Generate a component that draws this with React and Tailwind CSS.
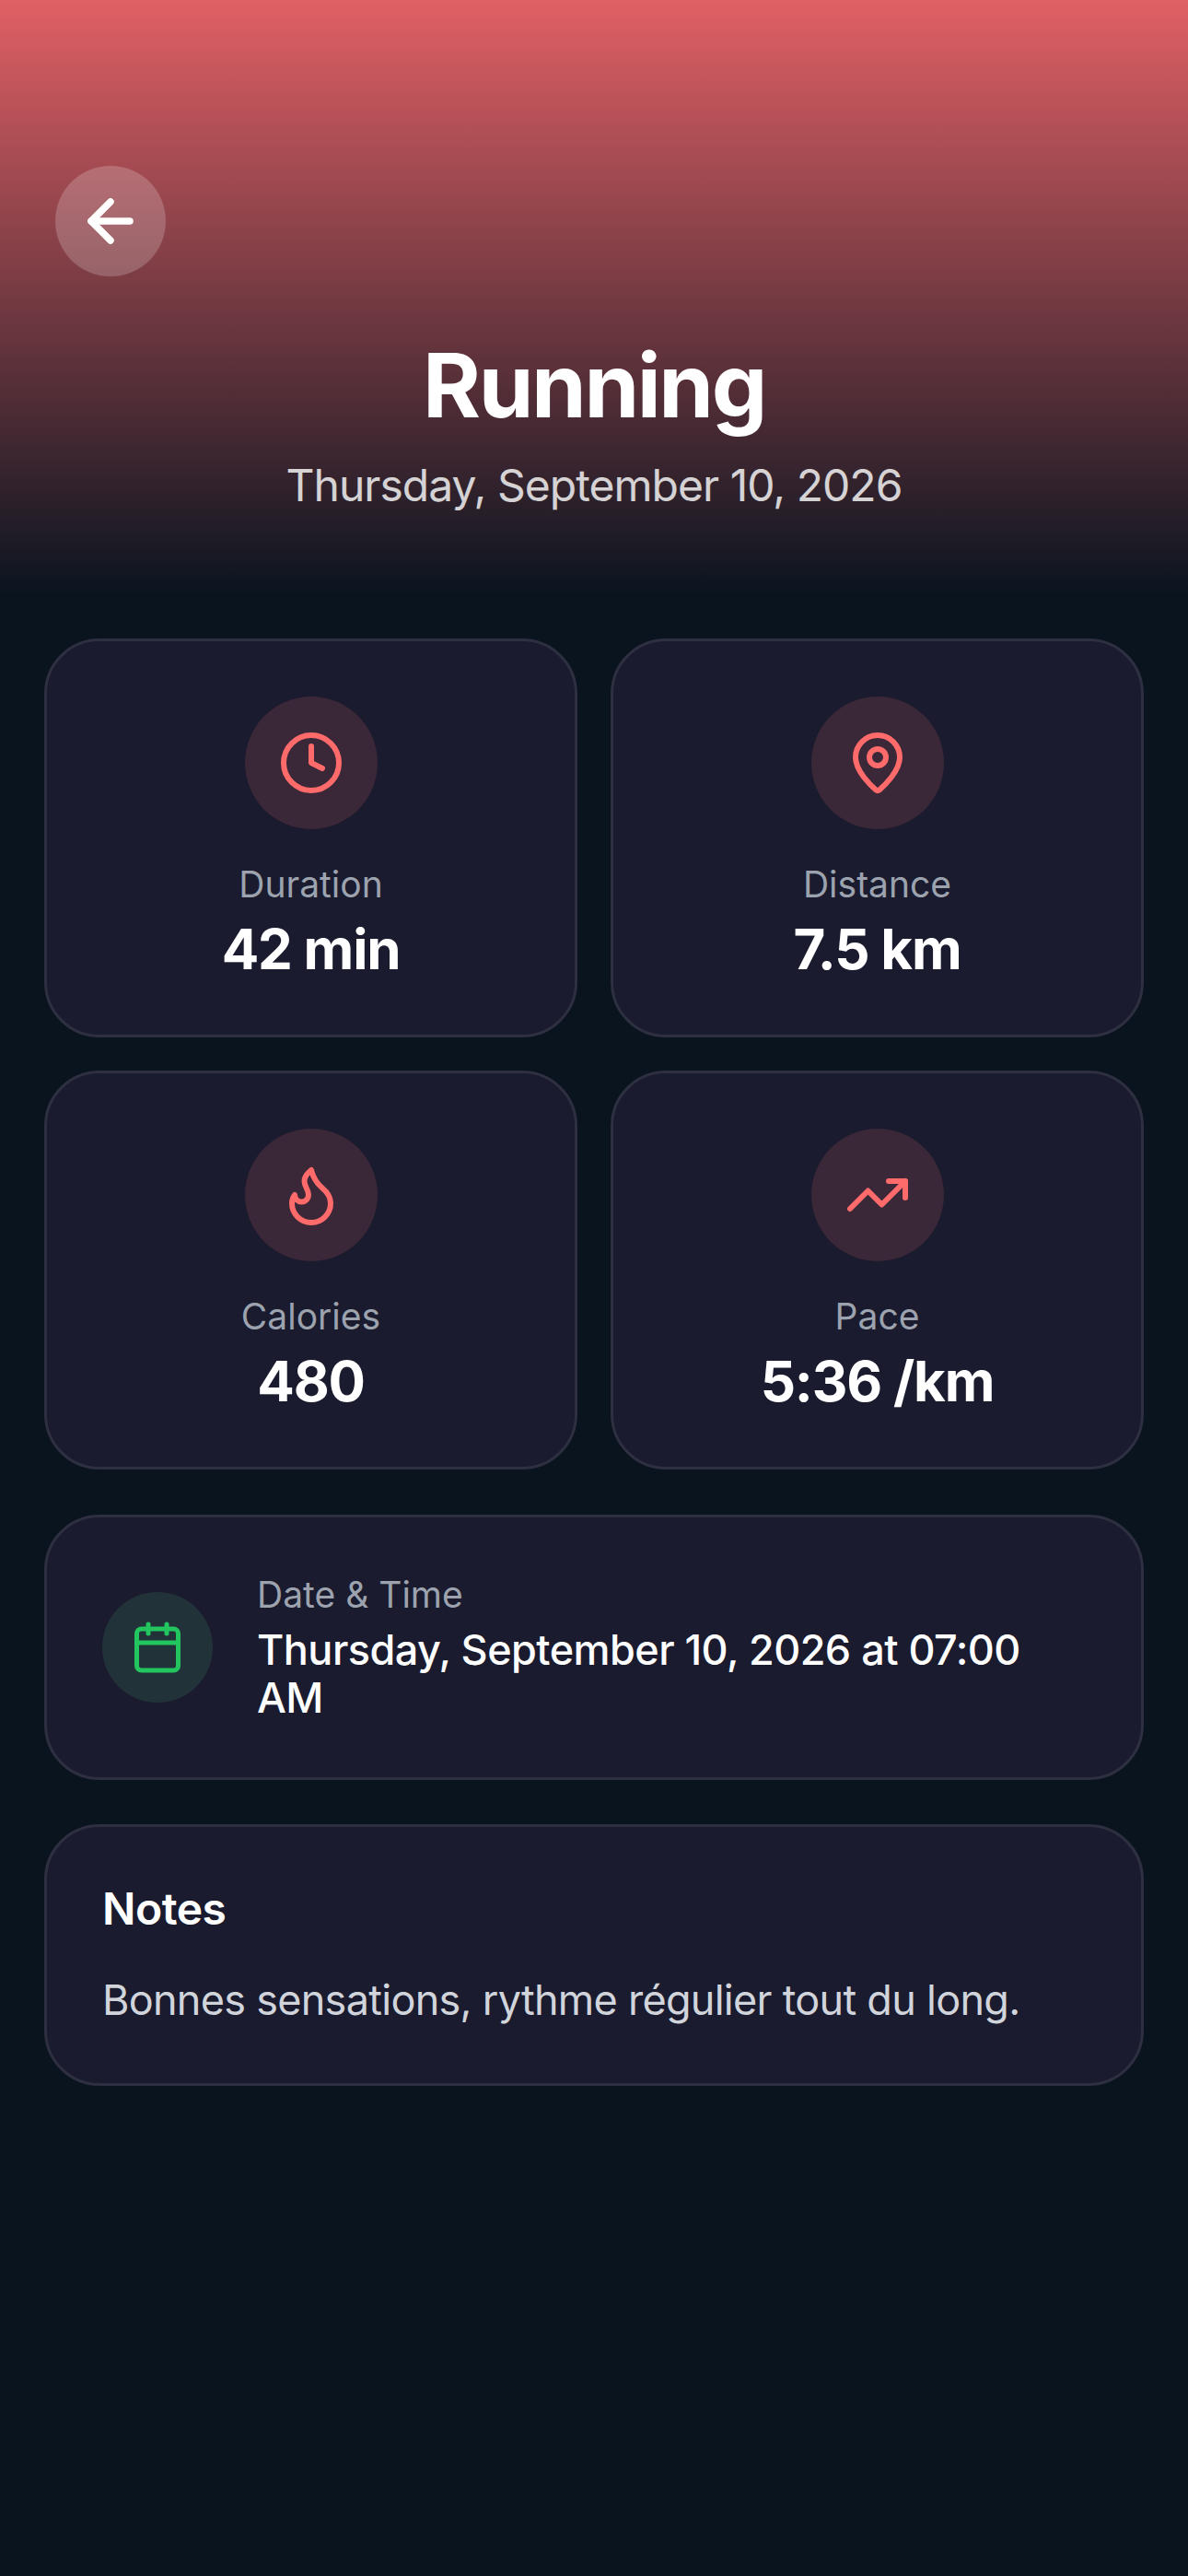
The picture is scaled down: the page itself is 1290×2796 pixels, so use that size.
import React from "react";
import { ArrowLeft, Clock, MapPin, Flame, TrendingUp, Calendar } from "lucide-react";

const stats = [
  { label: "Duration", value: "42 min", Icon: Clock },
  { label: "Distance", value: "7.5 km", Icon: MapPin },
  { label: "Calories", value: "480", Icon: Flame },
  { label: "Pace", value: "5:36 /km", Icon: TrendingUp },
];

const StatCard = ({ label, value, Icon }) => (
  <div className="flex flex-col items-center rounded-[60px] border-[3px] border-[#2e2f40] bg-[#1a1b2e] p-[60px]">
    <div className="flex h-[144px] w-[144px] items-center justify-center rounded-full bg-[#3a2737]">
      <Icon size={72} strokeWidth={2} className="text-[#ff6b6b]" />
    </div>
    <p className="mt-[36px] text-[39px] leading-[48px] text-[#9ca3af]">{label}</p>
    <p className="mt-[13px] text-[60px] leading-[66px] font-bold tracking-[-0.02em] text-white">{value}</p>
  </div>
);

export default function App() {
  return (
    <div className="min-h-[2796px] bg-[#0a141f] [font-family:Inter,sans-serif]">
      {/* Header */}
      <header className="h-[645px] bg-linear-to-b/srgb from-[#e06065] to-[#0a141f] px-[60px] pt-[180px]">
        <button className="flex h-[120px] w-[120px] items-center justify-center rounded-full bg-white/20">
          <ArrowLeft size={72} strokeWidth={2.5} className="text-white" />
        </button>
        <div className="mt-[60px] text-center">
          <h1 className="text-[96px] leading-[116px] font-bold tracking-[-0.025em] text-white">Running</h1>
          <p className="mt-[22px] text-[48px] leading-[58px] tracking-[-0.02em] text-white/80">Thursday, September 10, 2026</p>
        </div>
      </header>

      <main className="flex flex-col gap-[48px] px-[48px] pt-[48px]">
        <div className="grid grid-cols-2 gap-[36px] pb-[1px]">
          {stats.map((s) => (
            <StatCard key={s.label} {...s} />
          ))}
        </div>

        {/* Date and time */}
        <div className="flex items-center gap-[48px] rounded-[60px] border-[3px] border-[#2e2f40] bg-[#1a1b2e] p-[60px]">
          <div className="flex h-[120px] w-[120px] shrink-0 items-center justify-center rounded-full bg-[#213338]">
            <Calendar size={60} strokeWidth={2} className="text-[#22c55e]" />
          </div>
          <div className="min-w-0">
            <p className="text-[39px] leading-[48px] text-[#9ca3af]">Date &amp; Time</p>
            <p className="mt-[10px] text-[45px] leading-[52px] font-[550] tracking-[-0.012em] text-white">
              Thursday, September 10, 2026 at 07:00 AM
            </p>
          </div>
        </div>

        {/* Notes */}
        <div className="rounded-[60px] border-[3px] border-[#2e2f40] bg-[#1a1b2e] p-[60px]">
          <h2 className="text-[48px] leading-[57px] font-semibold tracking-[-0.01em] text-white">Notes</h2>
          <p className="mt-[41px] text-[45px] leading-[60px] tracking-[-0.016em] text-[#d1d5db]">
            Bonnes sensations, rythme régulier tout du long.
          </p>
        </div>
      </main>
    </div>
  );
}
